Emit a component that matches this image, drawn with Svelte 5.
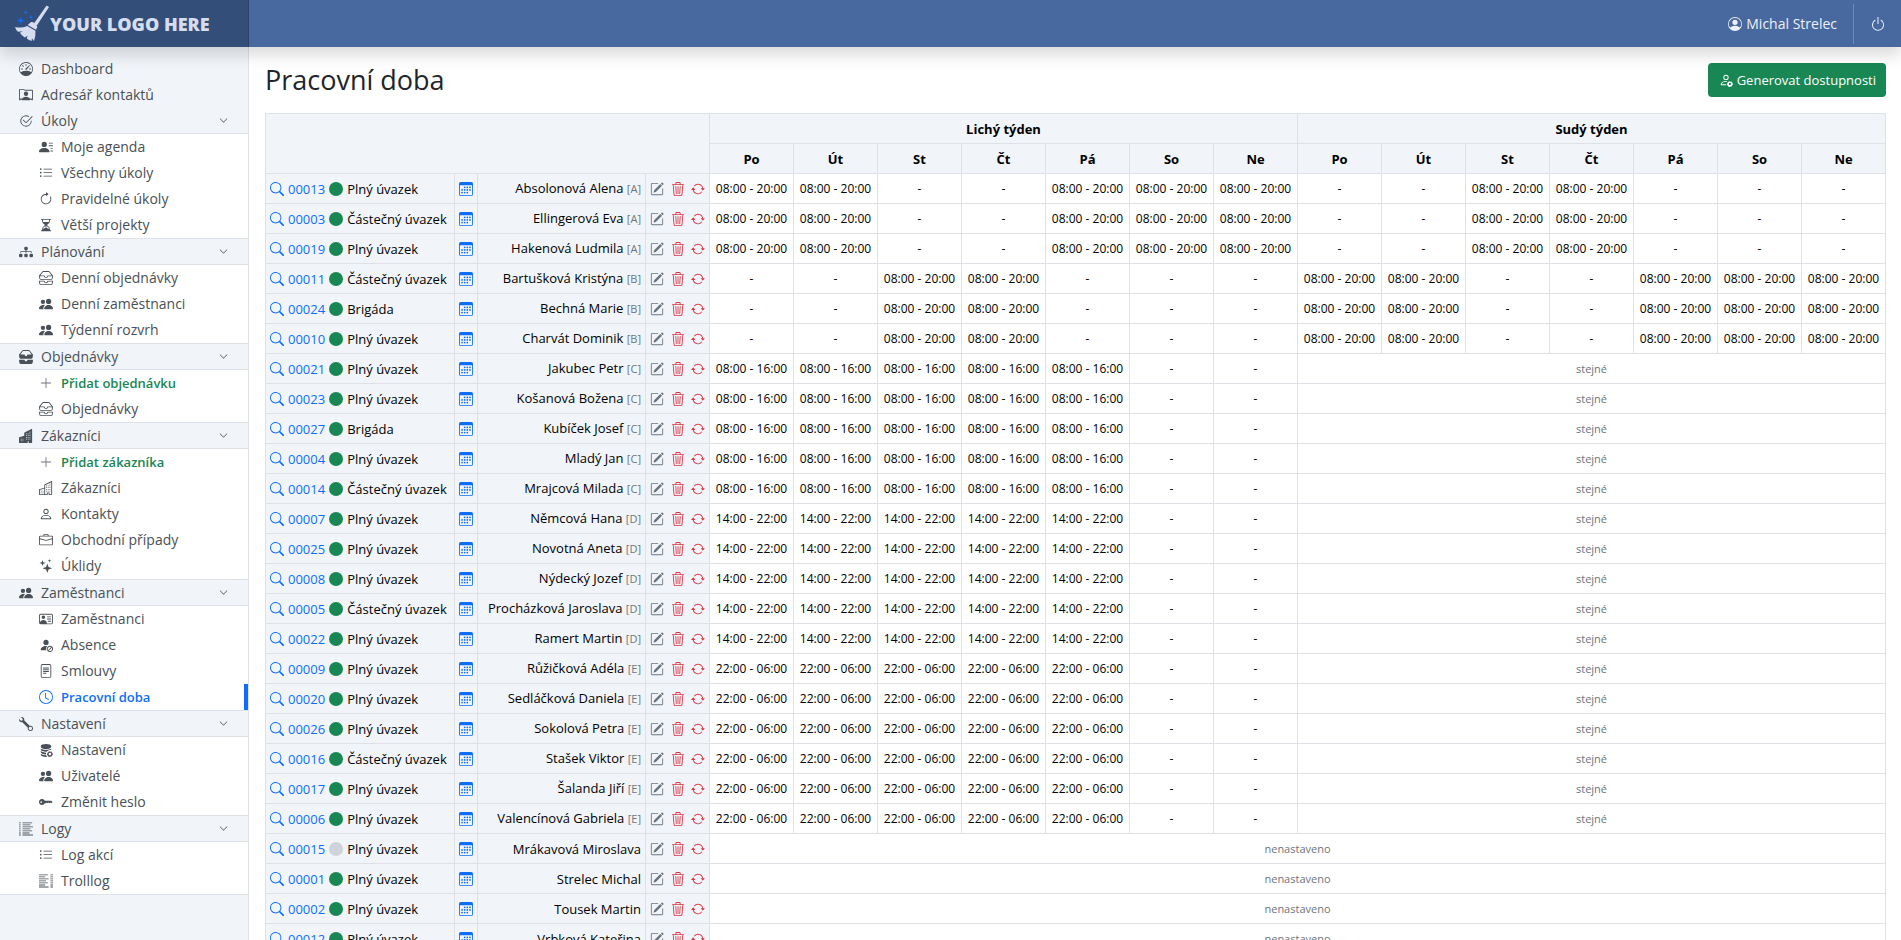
<script lang="ts">
  interface Item {
    icon: string;
    label: string;
    kind?: 'add' | 'active';
  }

  interface Section {
    icon: string;
    label: string;
    items: Item[];
  }

  // 16x16 outlines, filled with the current text colour
  const icons: Record<string, string> = {
    speedometer:
      'M8 2a.5.5 0 0 1 .5.5V4a.5.5 0 0 1-1 0V2.500A.5.5 0 0 1 8 2M3.732 3.732a.5.5 0 0 1 .707 0l.915.914a.5.5 0 1 1-.708.708l-.914-.915a.5.5 0 0 1 0-.707M2 8a.5.5 0 0 1 .5-.5h1.586a.5.5 0 0 1 0 1H2.500A.5.5 0 0 1 2 8m9.500 0a.5.5 0 0 1 .5-.5h1.500a.5.5 0 0 1 0 1H12a.5.5 0 0 1-.5-.5m.754-4.246a.39.39 0 0 0-.527-.020L7.547 7.310A.91.91 0 1 0 8.850 8.569l3.434-4.297a.39.39 0 0 0-.029-.518z M6.664 15.889A8 8 0 1 1 9.336.110a8 8 0 0 1-2.672 15.780zm-4.665-4.283A11.950 11.950 0 0 1 8 10c2.186 0 4.236.585 6.001 1.606a7 7 0 1 0-12.002 0',
    rolodex:
      'M8 9.050a2.500 2.500 0 1 0 0-5 2.500 2.500 0 0 0 0 5 M1 1a1 1 0 0 0-1 1v11a1 1 0 0 0 1 1h.5a.5.5 0 0 0 .5-.5.5.5 0 0 1 1 0 .5.5 0 0 0 .5.5h9a.5.5 0 0 0 .5-.5.5.5 0 0 1 1 0 .5.5 0 0 0 .5.5h.5a1 1 0 0 0 1-1V3a1 1 0 0 0-1-1H6.707L6 1.293A1 1 0 0 0 5.293 1zm0 1h4.293L6 2.707A1 1 0 0 0 6.707 3H15v10h-.085a1.500 1.500 0 0 0-2.400-.63C11.885 11.223 10.554 10 8 10c-2.555 0-3.886 1.224-4.514 2.370a1.500 1.500 0 0 0-2.400.63H1z',
    checkCircle:
      'M2.500 8a5.500 5.500 0 0 1 8.250-4.764.5.5 0 0 0 .5-.866A6.500 6.500 0 1 0 14.500 8a.5.5 0 0 0-1 0 5.500 5.500 0 1 1-11 0 M15.354 3.354a.5.5 0 0 0-.708-.708L8 9.293 5.354 6.646a.5.5 0 1 0-.708.708l3 3a.5.5 0 0 0 .708 0z',
    chevron:
      'M1.646 4.646a.5.5 0 0 1 .708 0L8 10.293l5.646-5.647a.5.5 0 0 1 .708.708l-6 6a.5.5 0 0 1-.708 0l-6-6a.5.5 0 0 1 0-.708',
    personLines:
      'M6 8a3 3 0 1 0 0-6 3 3 0 0 0 0 6m-5 6s-1 0-1-1 1-4 6-4 6 3 6 4-1 1-1 1zM11 3.500a.5.5 0 0 1 .5-.5h4a.5.5 0 0 1 0 1h-4a.5.5 0 0 1-.5-.5m.5 2.500a.5.5 0 0 0 0 1h4a.5.5 0 0 0 0-1zm2 3a.5.5 0 0 0 0 1h2a.5.5 0 0 0 0-1zm0 3a.5.5 0 0 0 0 1h2a.5.5 0 0 0 0-1z',
    list:
      'M5 11.500a.5.5 0 0 1 .5-.5h9a.5.5 0 0 1 0 1h-9a.5.5 0 0 1-.5-.5m0-4a.5.5 0 0 1 .5-.5h9a.5.5 0 0 1 0 1h-9a.5.5 0 0 1-.5-.5m0-4a.5.5 0 0 1 .5-.5h9a.5.5 0 0 1 0 1h-9a.5.5 0 0 1-.5-.5m-3 1a1 1 0 1 0 0-2 1 1 0 0 0 0 2m0 4a1 1 0 1 0 0-2 1 1 0 0 0 0 2m0 4a1 1 0 1 0 0-2 1 1 0 0 0 0 2',
    clockwise:
      'M8 3a5 5 0 1 0 4.546 2.914.5.5 0 0 1 .908-.417A6 6 0 1 1 8 2z M8 4.466V.534a.25.25 0 0 1 .410-.192l2.360 1.966c.12.100.12.284 0 .384L8.410 4.658A.25.25 0 0 1 8 4.466',
    hourglass:
      'M2.500 15a.5.5 0 1 1 0-1h1v-1a4.500 4.500 0 0 1 2.557-4.060c.29-.139.443-.377.443-.59v-.7c0-.213-.154-.451-.443-.59A4.500 4.500 0 0 1 3.500 3V2h-1a.5.5 0 0 1 0-1h11a.5.5 0 0 1 0 1h-1v1a4.500 4.500 0 0 1-2.557 4.060c-.29.139-.443.377-.443.59v.7c0 .213.154.451.443.59A4.500 4.500 0 0 1 12.500 13v1h1a.5.5 0 0 1 0 1zm2-13v1c0 .537.120 1.045.337 1.500h6.326c.216-.455.337-.963.337-1.500V2zm3 6.350c0 .701-.478 1.236-1.011 1.492A3.500 3.500 0 0 0 4.500 13s.866-1.299 3-1.480zm1 0v3.170c2.134.181 3 1.480 3 1.480a3.500 3.500 0 0 0-1.989-3.158C8.978 9.586 8.500 9.052 8.500 8.351z',
    diagram:
      'M6 3.500A1.500 1.500 0 0 1 7.500 2h1A1.500 1.500 0 0 1 10 3.500v1A1.500 1.500 0 0 1 8.500 6v1H14a.5.5 0 0 1 .5.5v1a.5.5 0 0 1-1 0V8h-5v.5a.5.5 0 0 1-1 0V8h-5v.5a.5.5 0 0 1-1 0v-1A.5.5 0 0 1 2 7h5.500V6A1.500 1.500 0 0 1 6 4.500zm-6 8A1.500 1.500 0 0 1 1.500 10h1A1.500 1.500 0 0 1 4 11.500v1A1.500 1.500 0 0 1 2.500 14h-1A1.500 1.500 0 0 1 0 12.500zm6 0A1.500 1.500 0 0 1 7.500 10h1a1.500 1.500 0 0 1 1.500 1.500v1A1.500 1.500 0 0 1 8.500 14h-1A1.500 1.500 0 0 1 6 12.500zm6 0a1.500 1.500 0 0 1 1.500-1.500h1a1.500 1.500 0 0 1 1.500 1.500v1a1.500 1.500 0 0 1-1.500 1.500h-1a1.500 1.500 0 0 1-1.500-1.500z',
    inboxes:
      'M4.980 1a.5.5 0 0 0-.390.188L1.540 5H6a.5.5 0 0 1 .5.5 1.500 1.500 0 0 0 3 0A.5.5 0 0 1 10 5h4.460l-3.050-3.812A.5.5 0 0 0 11.020 1zm9.954 5H10.450a2.500 2.500 0 0 1-4.900 0H1.066l.32 2.562A.5.5 0 0 0 1.884 9h12.234a.5.5 0 0 0 .496-.438zM3.809.563A1.500 1.500 0 0 1 4.981 0h6.038a1.500 1.500 0 0 1 1.172.563l3.700 4.625a.5.5 0 0 1 .105.374l-.39 3.124A1.500 1.500 0 0 1 14.117 10H1.883A1.500 1.500 0 0 1 .394 8.686l-.39-3.124a.5.5 0 0 1 .106-.374zM.125 11.170A.5.5 0 0 1 .5 11H6a.5.5 0 0 1 .5.5 1.500 1.500 0 0 0 3 0 .5.5 0 0 1 .5-.5h5.500a.5.5 0 0 1 .496.562l-.39 3.124A1.500 1.500 0 0 1 14.117 16H1.883a1.500 1.500 0 0 1-1.489-1.314l-.39-3.124a.5.5 0 0 1 .121-.393zm.941.830.32 2.562a.5.5 0 0 0 .497.438h12.234a.5.5 0 0 0 .496-.438l.32-2.562H10.450a2.500 2.500 0 0 1-4.900 0z',
    inboxesFill:
      'M4.980 1a.5.5 0 0 0-.390.188L1.540 5H6a.5.5 0 0 1 .5.5 1.500 1.500 0 0 0 3 0A.5.5 0 0 1 10 5h4.460l-3.050-3.812A.5.5 0 0 0 11.020 1zM3.810.563A1.500 1.500 0 0 1 4.980 0h6.040a1.500 1.500 0 0 1 1.170.563l3.700 4.625a.5.5 0 0 1 .106.374l-.39 3.124A1.500 1.500 0 0 1 14.117 10H1.883A1.500 1.500 0 0 1 .394 8.686l-.39-3.124a.5.5 0 0 1 .106-.374zM.125 11.170A.5.5 0 0 1 .5 11H6a.5.5 0 0 1 .5.5 1.500 1.500 0 0 0 3 0 .5.5 0 0 1 .5-.5h5.500a.5.5 0 0 1 .496.562l-.39 3.124A1.500 1.500 0 0 1 14.117 16H1.883a1.500 1.500 0 0 1-1.489-1.314l-.39-3.124a.5.5 0 0 1 .121-.393z',
    people:
      'M7 14s-1 0-1-1 1-4 5-4 5 3 5 4-1 1-1 1zm4-6a3 3 0 1 0 0-6 3 3 0 0 0 0 6m-5.784 6A2.240 2.240 0 0 1 5 13c0-1.355.680-2.750 1.936-3.720A6.300 6.300 0 0 0 5 9c-4 0-5 3-5 4s1 1 1 1zM4.500 8a2.500 2.500 0 1 0 0-5 2.500 2.500 0 0 0 0 5',
    plus:
      'M8 2a.5.5 0 0 1 .5.5v5h5a.5.5 0 0 1 0 1h-5v5a.5.5 0 0 1-1 0v-5h-5a.5.5 0 0 1 0-1h5v-5A.5.5 0 0 1 8 2',
    buildings:
      'M14.763.075A.5.5 0 0 1 15 .5v15a.5.5 0 0 1-.5.5h-3a.5.5 0 0 1-.5-.5V14h-1v1.500a.5.5 0 0 1-.5.5h-9a.5.5 0 0 1-.5-.5V10a.5.5 0 0 1 .342-.474L6 7.640V4.500a.5.5 0 0 1 .276-.447l8-4a.5.5 0 0 1 .487.022M6 8.694 1 10.360V15h5zM7 15h2v-1.500a.5.5 0 0 1 .5-.5h2a.5.5 0 0 1 .5.5V15h2V1.309l-7 3.500z M2 11h1v1H2zm2 0h1v1H4zm-2 2h1v1H2zm2 0h1v1H4zm4-4h1v1H8zm2 0h1v1h-1zm-2 2h1v1H8zm2 0h1v1h-1zm2-2h1v1h-1zm0 2h1v1h-1zM8 7h1v1H8zm2 0h1v1h-1zm2 0h1v1h-1zM8 5h1v1H8zm2 0h1v1h-1zm2 0h1v1h-1zm0-2h1v1h-1z',
    buildingsFill:
      'M15 .5a.5.5 0 0 0-.724-.447l-8 4A.5.5 0 0 0 6 4.500v3.140L.342 9.526A.5.5 0 0 0 0 10v5.500a.5.5 0 0 0 .5.5h9a.5.5 0 0 0 .5-.5V14h1v1.500a.5.5 0 0 0 .5.5h3a.5.5 0 0 0 .5-.5zM2 11h1v1H2zm2 0h1v1H4zm-1 2v1H2v-1zm1 0h1v1H4zm9-10v1h-1V3zM8 5h1v1H8zm1 2v1H8V7zM8 9h1v1H8zm2 0h1v1h-1zm-1 2v1H8v-1zm1 0h1v1h-1zm3-2v1h-1V9zm-1 2h1v1h-1zm-2-4h1v1h-1zm3 0v1h-1V7zm-2-2v1h-1V5zm1 0h1v1h-1z',
    person:
      'M8 8a3 3 0 1 0 0-6 3 3 0 0 0 0 6m2-3a2 2 0 1 1-4 0 2 2 0 0 1 4 0m4 8c0 1-1 1-1 1H3s-1 0-1-1 1-4 6-4 6 3 6 4m-1-.004c-.001-.246-.154-.986-.832-1.664C11.516 10.680 10.289 10 8 10s-3.516.680-4.168 1.332c-.678.678-.830 1.418-.832 1.664z',
    briefcase:
      'M6.500 1A1.500 1.500 0 0 0 5 2.500V3H1.500A1.500 1.500 0 0 0 0 4.500v8A1.500 1.500 0 0 0 1.500 14h13a1.500 1.500 0 0 0 1.500-1.500v-8A1.500 1.500 0 0 0 14.500 3H11v-.5A1.500 1.500 0 0 0 9.500 1zm0 1h3a.5.5 0 0 1 .5.5V3H6v-.5a.5.5 0 0 1 .5-.5m1.886 6.914L15 7.151V12.500a.5.5 0 0 1-.5.5h-13a.5.5 0 0 1-.5-.5V7.150l6.614 1.764a1.500 1.500 0 0 0 .772 0M1.500 4h13a.5.5 0 0 1 .5.5v1.616L8.129 7.948a.5.5 0 0 1-.258 0L1 6.116V4.500a.5.5 0 0 1 .5-.5',
    stars:
      'M9.500 5 L10.900 9.100 15 10.500 10.900 11.900 9.500 16 8.100 11.900 4 10.500 8.100 9.100z M4 1 L4.900 3.600 7.500 4.500 4.900 5.400 4 8 3.100 5.400 .5 4.500 3.100 3.600z M12 0 L12.500 1.500 14 2 12.500 2.500 12 4 11.500 2.500 10 2 11.500 1.500z',
    vcard:
      'M5 8a2 2 0 1 0 0-4 2 2 0 0 0 0 4m4-2.500a.5.5 0 0 1 .5-.5h4a.5.5 0 0 1 0 1h-4a.5.5 0 0 1-.5-.5M9 8a.5.5 0 0 1 .5-.5h4a.5.5 0 0 1 0 1h-4A.5.5 0 0 1 9 8m1 2.500a.5.5 0 0 1 .5-.5h3a.5.5 0 0 1 0 1h-3a.5.5 0 0 1-.5-.5 M2 2a2 2 0 0 0-2 2v8a2 2 0 0 0 2 2h12a2 2 0 0 0 2-2V4a2 2 0 0 0-2-2zM1 4a1 1 0 0 1 1-1h12a1 1 0 0 1 1 1v8a1 1 0 0 1-1 1H8.960q.04-.245.040-.5C9 10.567 7.210 9 5 9c-2.086 0-3.800 1.398-3.984 3.181A1 1 0 0 1 1 12z',
    personSlash:
      'M13.879 10.414a2.501 2.501 0 0 0-3.465 3.465zm.707.707-3.465 3.465a2.501 2.501 0 0 0 3.465-3.465m-4.560-1.096a3.500 3.500 0 1 1 4.949 4.950 3.500 3.500 0 0 1-4.950-4.950zM11 5a3 3 0 1 1-6 0 3 3 0 0 1 6 0m-9 8c0 1 1 1 1 1h5.256A4.500 4.500 0 0 1 8 12.500a4.500 4.500 0 0 1 1.544-3.393Q8.844 9.002 8 9c-5 0-6 3-6 4',
    fileText:
      'M5 4a.5.5 0 0 0 0 1h6a.5.5 0 0 0 0-1zm-.5 2.500A.5.5 0 0 1 5 6h6a.5.5 0 0 1 0 1H5a.5.5 0 0 1-.5-.5M5 8a.5.5 0 0 0 0 1h6a.5.5 0 0 0 0-1zm0 2a.5.5 0 0 0 0 1h3a.5.5 0 0 0 0-1z M2 2a2 2 0 0 1 2-2h8a2 2 0 0 1 2 2v12a2 2 0 0 1-2 2H4a2 2 0 0 1-2-2zm10-1H4a1 1 0 0 0-1 1v12a1 1 0 0 0 1 1h8a1 1 0 0 0 1-1V2a1 1 0 0 0-1-1',
    clock:
      'M8 3.500a.5.5 0 0 0-1 0V9a.5.5 0 0 0 .252.434l3.500 2a.5.5 0 0 0 .496-.868L8 8.710z M8 16A8 8 0 1 0 8 0a8 8 0 0 0 0 16m7-8A7 7 0 1 1 1 8a7 7 0 0 1 14 0',
    wrench:
      'M.102 2.223A3.004 3.004 0 0 0 3.780 5.897l6.341 6.252A3.003 3.003 0 0 0 13 16a3 3 0 1 0-.851-5.878L5.897 3.781A3.004 3.004 0 0 0 2.223.100l2.141 2.142L4 4l-1.757.364zm13.370 9.019.528.026.287.445.445.287.026.529L15 13l-.242.471-.026.529-.445.287-.287.445-.529.026L13 15l-.471-.242-.529-.026-.287-.445-.445-.287-.026-.529L11 13l.242-.471.026-.529.445-.287.287-.445.529-.026L13 11z',
    database:
      'M8 1c-1.573 0-3.022.289-4.096.777C2.875 2.245 2 2.993 2 4s.875 1.755 1.904 2.223C4.978 6.711 6.427 7 8 7s3.022-.289 4.096-.777C13.125 5.755 14 5.007 14 4s-.875-1.755-1.904-2.223C11.022 1.289 9.573 1 8 1 M2 7v-.839c.457.432 1.004.751 1.490.972C4.722 7.693 6.318 8 8 8s3.278-.307 4.510-.867c.486-.22 1.033-.54 1.490-.972V7c0 .424-.155.802-.411 1.133a4.510 4.510 0 0 0-4.815 1.843A12 12 0 0 1 8 10c-1.573 0-3.022-.289-4.096-.777C2.875 8.755 2 8.007 2 7m6.257 3.998L8 11c-1.682 0-3.278-.307-4.510-.867-.486-.22-1.033-.54-1.490-.972V10c0 1.007.875 1.755 1.904 2.223C4.978 12.711 6.427 13 8 13h.027a4.550 4.550 0 0 1 .230-2.002m-.002 3L8 14c-1.682 0-3.278-.307-4.510-.867-.486-.22-1.033-.54-1.490-.972V13c0 1.007.875 1.755 1.904 2.223C4.978 15.711 6.427 16 8 16c.536 0 1.058-.034 1.555-.097a4.500 4.500 0 0 1-1.300-1.905 M12.500 9 L13 10 14.200 9.800 14.600 10.900 15.700 11.300 15.500 12.500 16 13.500 15 14 14.600 15.200 13.400 15.500 12.500 16.200 11.500 15.600 10.300 15.400 10 14.200 9 13.500 9.500 12.500 9.300 11.300 10.400 10.900 10.900 9.800 12 10zm0 2.200a1.500 1.500 0 1 0 .001 3 1.500 1.500 0 0 0 0-3',
    key:
      'M3.500 11.500a3.500 3.500 0 1 1 3.163-5H14L15.500 8 14 9.500l-1-1-1 1-1-1-1 1-1-1-1 1H6.663a3.500 3.500 0 0 1-3.163 2M2.500 9a1 1 0 1 0 0-2 1 1 0 0 0 0 2',
    logs:
      'M0 .5h2v1H0zM4 .5h11v1H4zM0 2.800h2v1H0zM4 2.800h9v1H4zM0 5.100h2v1H0zM4 5.100h12v1H4zM0 7.400h2v1H0zM4 7.400h9v1H4zM0 9.700h2v1H0zM4 9.700h11v1H4zM0 12h2v1H0zM4 12h8v1H4zM0 14.300h2v1H0zM4 14.300h12v1H4z',
    bodyText:
      'M0 .5h10v1H0zM13 .5h3v1h-3zM0 2.800h7v1H0zM13 2.800h3v1h-3zM0 5.100h11v1H0zM13 5.100h3v1h-3zM0 7.400h8v1H0zM13 7.400h3v1h-3zM0 9.700h10v1H0zM13 9.700h3v1h-3zM0 12h7v1H0zM13 12h3v1h-3zM0 14.300h11v1H0zM13 14.300h3v1h-3z',
    search:
      'M11.742 10.344a6.500 6.500 0 1 0-1.397 1.398h-.001q.044.060.098.115l3.850 3.850a1 1 0 0 0 1.415-1.414l-3.850-3.850a1 1 0 0 0-.115-.100zM12 6.500a5.500 5.500 0 1 1-11 0 5.500 5.500 0 0 1 11 0',
    calendar:
      'M14 0H2a2 2 0 0 0-2 2v12a2 2 0 0 0 2 2h12a2 2 0 0 0 2-2V2a2 2 0 0 0-2-2M1 3.857h14v10.286c0 .473-.448.857-1 .857H2c-.552 0-1-.384-1-.857z M6.500 7a1 1 0 1 0 0-2 1 1 0 0 0 0 2m3 0a1 1 0 1 0 0-2 1 1 0 0 0 0 2m3 0a1 1 0 1 0 0-2 1 1 0 0 0 0 2m-9 3a1 1 0 1 0 0-2 1 1 0 0 0 0 2m3 0a1 1 0 1 0 0-2 1 1 0 0 0 0 2m3 0a1 1 0 1 0 0-2 1 1 0 0 0 0 2m3 0a1 1 0 1 0 0-2 1 1 0 0 0 0 2m-9 3a1 1 0 1 0 0-2 1 1 0 0 0 0 2m3 0a1 1 0 1 0 0-2 1 1 0 0 0 0 2m3 0a1 1 0 1 0 0-2 1 1 0 0 0 0 2',
    edit:
      'M15.502 1.940a.5.5 0 0 1 0 .706L14.459 3.690l-2-2L13.502.646a.5.5 0 0 1 .707 0l1.293 1.293zm-1.750 2.456-2-2L4.939 9.210a.5.5 0 0 0-.121.196l-.805 2.414a.25.25 0 0 0 .316.316l2.414-.805a.5.5 0 0 0 .196-.120z M1 13.500A1.500 1.500 0 0 0 2.500 15h11a1.500 1.500 0 0 0 1.500-1.500v-6a.5.5 0 0 0-1 0v6a.5.5 0 0 1-.5.5h-11a.5.5 0 0 1-.5-.5v-11a.5.5 0 0 1 .5-.5H9a.5.5 0 0 0 0-1H2.500A1.500 1.500 0 0 0 1 2.500z',
    trash:
      'M6.500 1h3a.5.5 0 0 1 .5.5v1H6v-1a.5.5 0 0 1 .5-.5M11 2.500v-1A1.500 1.500 0 0 0 9.500 0h-3A1.500 1.500 0 0 0 5 1.500v1H1.500a.5.5 0 0 0 0 1h.538l.853 10.660A2 2 0 0 0 4.885 16h6.230a2 2 0 0 0 1.994-1.840l.853-10.660h.538a.5.5 0 0 0 0-1zm1.958 1-.846 10.580a1 1 0 0 1-.997.920h-6.230a1 1 0 0 1-.997-.920L3.042 3.500zm-7.487 1a.5.5 0 0 1 .528.470l.5 8.500a.5.5 0 0 1-.998.060L5 5.030a.5.5 0 0 1 .470-.530Zm5.058 0a.5.5 0 0 1 .470.530l-.5 8.500a.5.5 0 1 1-.998-.060l.5-8.500a.5.5 0 0 1 .528-.470M8 4.500a.5.5 0 0 1 .5.5v8.500a.5.5 0 0 1-1 0V5a.5.5 0 0 1 .5-.5',
    repeat:
      'M11.534 7h3.932a.25.25 0 0 1 .192.410l-1.966 2.360a.25.25 0 0 1-.384 0l-1.966-2.360a.25.25 0 0 1 .192-.410m-11 2h3.932a.25.25 0 0 0 .192-.410L2.692 6.230a.25.25 0 0 0-.384 0L.342 8.590A.25.25 0 0 0 .534 9 M8 3c-1.552 0-2.940.707-3.857 1.818a.5.5 0 1 1-.771-.636A6.002 6.002 0 0 1 13.917 7H12.900A5 5 0 0 0 8 3M3.100 9a5.002 5.002 0 0 0 8.757 2.182.5.5 0 1 1 .771.636A6.002 6.002 0 0 1 2.083 9z',
    personCircle:
      'M11 6a3 3 0 1 1-6 0 3 3 0 0 1 6 0 M0 8a8 8 0 1 1 16 0A8 8 0 0 1 0 8m8-7a7 7 0 0 0-5.468 11.370C3.242 11.226 4.805 10 8 10s4.757 1.225 5.468 2.370A7 7 0 0 0 8 1',
    power:
      'M7.500 1v7h1V1z M3 8.812a5 5 0 0 1 2.578-4.375l-.485-.874A6 6 0 1 0 11 3.616l-.501.865A5 5 0 1 1 3 8.812',
    personGear:
      'M11 5a3 3 0 1 1-6 0 3 3 0 0 1 6 0M8 7a2 2 0 1 0 0-4 2 2 0 0 0 0 4m.256 7a4.500 4.500 0 0 1-.229-1.004H3c.001-.246.154-.986.832-1.664C4.484 10.680 5.711 10 8 10q.390 0 .740.025c.226-.341.496-.650.804-.918Q8.844 9.002 8 9c-5 0-6 3-6 4s1 1 1 1z M12.500 9 L13 10 14.200 9.800 14.600 10.900 15.700 11.300 15.500 12.500 16 13.500 15 14 14.600 15.200 13.400 15.500 12.500 16.200 11.500 15.600 10.300 15.400 10 14.200 9 13.500 9.500 12.500 9.300 11.300 10.400 10.900 10.900 9.800 12 10zm0 2.200a1.300 1.300 0 1 0 .001 2.600 1.300 1.300 0 0 0 0-2.600',
  };

  const topItems: Item[] = [
    { icon: 'speedometer', label: 'Dashboard' },
    { icon: 'rolodex', label: 'Adresář kontaktů' },
  ];

  const sections: Section[] = [
    {
      icon: 'checkCircle',
      label: 'Úkoly',
      items: [
        { icon: 'personLines', label: 'Moje agenda' },
        { icon: 'list', label: 'Všechny úkoly' },
        { icon: 'clockwise', label: 'Pravidelné úkoly' },
        { icon: 'hourglass', label: 'Větší projekty' },
      ],
    },
    {
      icon: 'diagram',
      label: 'Plánování',
      items: [
        { icon: 'inboxes', label: 'Denní objednávky' },
        { icon: 'people', label: 'Denní zaměstnanci' },
        { icon: 'people', label: 'Týdenní rozvrh' },
      ],
    },
    {
      icon: 'inboxesFill',
      label: 'Objednávky',
      items: [
        { icon: 'plus', label: 'Přidat objednávku', kind: 'add' },
        { icon: 'inboxes', label: 'Objednávky' },
      ],
    },
    {
      icon: 'buildingsFill',
      label: 'Zákazníci',
      items: [
        { icon: 'plus', label: 'Přidat zákazníka', kind: 'add' },
        { icon: 'buildings', label: 'Zákazníci' },
        { icon: 'person', label: 'Kontakty' },
        { icon: 'briefcase', label: 'Obchodní případy' },
        { icon: 'stars', label: 'Úklidy' },
      ],
    },
    {
      icon: 'people',
      label: 'Zaměstnanci',
      items: [
        { icon: 'vcard', label: 'Zaměstnanci' },
        { icon: 'personSlash', label: 'Absence' },
        { icon: 'fileText', label: 'Smlouvy' },
        { icon: 'clock', label: 'Pracovní doba', kind: 'active' },
      ],
    },
    {
      icon: 'wrench',
      label: 'Nastavení',
      items: [
        { icon: 'database', label: 'Nastavení' },
        { icon: 'people', label: 'Uživatelé' },
        { icon: 'key', label: 'Změnit heslo' },
      ],
    },
    {
      icon: 'logs',
      label: 'Logy',
      items: [
        { icon: 'list', label: 'Log akcí' },
        { icon: 'bodyText', label: 'Trolllog' },
      ],
    },
  ];

  const days = ['Po', 'Út', 'St', 'Čt', 'Pá', 'So', 'Ne'];

  const long = '08:00 - 20:00';
  const longWeek = [long, long, '-', '-', long, long, long];
  const shortWeek = ['-', '-', long, long, '-', '-', '-'];
  const workdays = (hours: string) => [hours, hours, hours, hours, hours, '-', '-'];

  // odd week and even week per shift; a missing even week repeats the odd one
  const shifts: Record<string, { odd: string[]; even?: string[] }> = {
    A: { odd: longWeek, even: shortWeek },
    B: { odd: shortWeek, even: longWeek },
    C: { odd: workdays('08:00 - 16:00') },
    D: { odd: workdays('14:00 - 22:00') },
    E: { odd: workdays('22:00 - 06:00') },
  };

  const full = 'Plný úvazek';
  const part = 'Částečný úvazek';
  const temp = 'Brigáda';

  const employees = [
    { id: '00013', contract: full, name: 'Absolonová Alena', shift: 'A' },
    { id: '00003', contract: part, name: 'Ellingerová Eva', shift: 'A' },
    { id: '00019', contract: full, name: 'Hakenová Ludmila', shift: 'A' },
    { id: '00011', contract: part, name: 'Bartušková Kristýna', shift: 'B' },
    { id: '00024', contract: temp, name: 'Bechná Marie', shift: 'B' },
    { id: '00010', contract: full, name: 'Charvát Dominik', shift: 'B' },
    { id: '00021', contract: full, name: 'Jakubec Petr', shift: 'C' },
    { id: '00023', contract: full, name: 'Košanová Božena', shift: 'C' },
    { id: '00027', contract: temp, name: 'Kubíček Josef', shift: 'C' },
    { id: '00004', contract: full, name: 'Mladý Jan', shift: 'C' },
    { id: '00014', contract: part, name: 'Mrajcová Milada', shift: 'C' },
    { id: '00007', contract: full, name: 'Němcová Hana', shift: 'D' },
    { id: '00025', contract: full, name: 'Novotná Aneta', shift: 'D' },
    { id: '00008', contract: full, name: 'Nýdecký Jozef', shift: 'D' },
    { id: '00005', contract: part, name: 'Procházková Jaroslava', shift: 'D' },
    { id: '00022', contract: full, name: 'Ramert Martin', shift: 'D' },
    { id: '00009', contract: full, name: 'Růžičková Adéla', shift: 'E' },
    { id: '00020', contract: full, name: 'Sedláčková Daniela', shift: 'E' },
    { id: '00026', contract: full, name: 'Sokolová Petra', shift: 'E' },
    { id: '00016', contract: part, name: 'Stašek Viktor', shift: 'E' },
    { id: '00017', contract: full, name: 'Šalanda Jiří', shift: 'E' },
    { id: '00006', contract: full, name: 'Valencínová Gabriela', shift: 'E' },
    { id: '00015', contract: full, name: 'Mrákavová Miroslava', inactive: true },
    { id: '00001', contract: full, name: 'Strelec Michal' },
    { id: '00002', contract: full, name: 'Tousek Martin' },
    { id: '00012', contract: full, name: 'Vrbková Kateřina' },
  ];
</script>

{#snippet icon(name: string)}
  <svg class="icon" viewBox="0 0 16 16" aria-hidden="true"><path fill-rule="evenodd" d={icons[name]} /></svg>
{/snippet}

<div class="app">
  <header class="topbar">
    <a class="brand" href="#home">
      <svg class="brand__mark" viewBox="0 0 36 38" aria-hidden="true">
        <path fill="#d5ddef" d="M32.500 0.500 L35 2 L22.500 21 L19.500 19z" />
        <path fill="#d5ddef" d="M16.500 17.500 Q21 17.500 23 22.500 L21.500 25.500 L13 20.500z" />
        <path
          fill="#d5ddef"
          d="M12.500 21.500 L21 26.500 Q21.500 32 19.500 37 L17.500 34.500 L17 37 Q14.500 36.500 12 34.500 L13 31.500 L10 33.500 Q6.500 31 5 28.500 L8 27 L3 27.500 Q1 25.500 0 22.500 Q7 24 12.500 21.500z"
        />
        <path
          fill="#0d6efd"
          d="M6 12 L7 15 10 16 7 17 6 20 5 17 2 16 5 15z M11 5 L11.600 6.900 13.500 7.500 11.600 8.100 11 10 10.400 8.100 8.500 7.500 10.400 6.900z M16.500 10 L17.100 11.900 19 12.500 17.100 13.100 16.500 15 15.900 13.100 14 12.500 15.900 11.900z"
        />
      </svg>
      <span>YOUR LOGO HERE</span>
    </a>
    <nav class="topbar__user" aria-label="Uživatel">
      <a class="topbar__name" href="#profile">{@render icon('personCircle')} Michal Strelec</a>
      <a class="topbar__logout" href="#logout" aria-label="Odhlásit">{@render icon('power')}</a>
    </nav>
  </header>

  <div class="body">
    <nav class="sidebar" aria-label="Menu">
      {#each topItems as item}
        <a class="sidebar__link" href="#menu">{@render icon(item.icon)}{item.label}</a>
      {/each}
      {#each sections as section}
        <button class="sidebar__link sidebar__heading" type="button" aria-expanded="true">
          {@render icon(section.icon)}{section.label}
          <span class="sidebar__chevron">{@render icon('chevron')}</span>
        </button>
        <div class="sidebar__items">
          {#each section.items as item}
            <a class={['sidebar__link', 'sidebar__link--sub', item.kind]} href="#menu">
              {@render icon(item.icon)}{item.label}
            </a>
          {/each}
        </div>
      {/each}
    </nav>

    <main class="content">
      <div class="content__head">
        <h1>Pracovní doba</h1>
        <button class="generate" type="button">{@render icon('personGear')} Generovat dostupnosti</button>
      </div>

      <table class="hours">
        <colgroup>
          <col class="col-contract" />
          <col class="col-calendar" />
          <col class="col-name" />
          <col class="col-actions" />
          <col span="14" />
        </colgroup>
        <thead>
          <tr>
            <td colspan="4" rowspan="2"></td>
            <th colspan="7">Lichý týden</th>
            <th colspan="7">Sudý týden</th>
          </tr>
          <tr>
            {#each [...days, ...days] as day}
              <th>{day}</th>
            {/each}
          </tr>
        </thead>
        <tbody>
          {#each employees as employee}
            <tr>
              <td class="side">
                <div class="contract">
                  <a href="#detail">{@render icon('search')} {employee.id}</a>
                  <span class={['dot', { 'dot--off': employee.inactive }]}></span>
                  {employee.contract}
                </div>
              </td>
              <td class="side side--calendar">
                <a href="#calendar" aria-label="Kalendář">{@render icon('calendar')}</a>
              </td>
              <td class="side side--name">
                {employee.name}
                {#if employee.shift}<small>[{employee.shift}]</small>{/if}
              </td>
              <td class="side">
                <div class="actions">
                  <button type="button" aria-label="Upravit">{@render icon('edit')}</button>
                  <button class="danger" type="button" aria-label="Smazat">{@render icon('trash')}</button>
                  <button class="danger" type="button" aria-label="Obnovit">{@render icon('repeat')}</button>
                </div>
              </td>
              {#if employee.shift}
                {#each shifts[employee.shift].odd as hours}
                  <td class="time">{hours}</td>
                {/each}
                {#if shifts[employee.shift].even}
                  {#each shifts[employee.shift].even ?? [] as hours}
                    <td class="time">{hours}</td>
                  {/each}
                {:else}
                  <td class="note" colspan="7">stejné</td>
                {/if}
              {:else}
                <td class="note" colspan="14">nenastaveno</td>
              {/if}
            </tr>
          {/each}
        </tbody>
      </table>
    </main>
  </div>
</div>

<style>
  :global(body) {
    background: #fff;
  }

  .app {
    display: flex;
    flex-direction: column;
    height: 100vh;
    overflow: hidden;
    font-family: 'Segoe UI', 'Open Sans', 'Noto Sans', sans-serif;
    font-size: 13px;
    line-height: 20px;
    color: #000;
  }

  .app :global(*) {
    box-sizing: border-box;
  }

  a {
    color: #0d6efd;
    text-decoration: none;
  }

  button {
    font: inherit;
    border: 0;
    cursor: pointer;
  }

  .icon {
    display: block;
    flex: none;
    width: 14px;
    height: 14px;
    fill: currentColor;
  }

  .topbar {
    position: relative;
    z-index: 1;
    display: flex;
    flex: none;
    justify-content: space-between;
    height: 47px;
    background: #4868a0;
    box-shadow: 0 8px 16px rgba(0, 0, 0, 0.15);
  }

  .brand {
    display: flex;
    align-items: center;
    width: 249px;
    padding-left: 15px;
    background: #334e78;
    border-right: 1px solid #2b4166;
    color: #d5ddef;
    font-size: 18px;
    font-weight: 800;
    white-space: nowrap;
  }

  .brand__mark {
    width: 35px;
    height: 37px;
  }

  .topbar__user {
    display: flex;
    align-items: center;
  }

  .topbar__user a {
    display: flex;
    align-items: center;
    gap: 4px;
    height: 40px;
    color: #eef1f8;
    font-size: 14px;
    font-weight: 500;
  }

  .topbar__user .topbar__name {
    padding-right: 16px;
    border-right: 1px solid #6f89ba;
  }

  .topbar__user .topbar__logout {
    padding: 0 15px 0 16px;
  }

  .topbar__logout .icon {
    width: 16px;
    height: 16px;
  }

  .body {
    display: flex;
    flex: 1;
    min-height: 0;
  }

  .sidebar {
    flex: none;
    width: 249px;
    padding-top: 9px;
    background: #f1f5fa;
    border-right: 1px solid #dee2e6;
    overflow: hidden;
  }

  .sidebar__link {
    display: flex;
    align-items: center;
    gap: 8px;
    width: 100%;
    height: 26px;
    padding: 0 20px 0 19px;
    background: none;
    color: #495057;
    font-size: 14px;
    font-weight: 500;
    text-align: left;
  }

  .sidebar__heading {
    height: 27px;
    border-top: 1px solid #dee2e6;
    border-bottom: 1px solid #dee2e6;
  }

  .sidebar > .sidebar__link + .sidebar__heading {
    height: 26px;
    border-top: 0;
  }

  .sidebar__chevron {
    margin-left: auto;
  }

  .sidebar__chevron .icon {
    width: 9px;
    height: 9px;
  }

  .sidebar__items {
    background: #fff;
  }

  .sidebar__items:last-child {
    border-bottom: 1px solid #dee2e6;
  }

  .sidebar__link--sub {
    padding-left: 39px;
  }

  .sidebar__link.add {
    color: #198754;
    font-size: 13px;
    font-weight: 600;
  }

  .sidebar__link.add .icon {
    color: #6c757d;
  }

  .sidebar__link.active {
    border-right: 4px solid #0d6efd;
    color: #0d6efd;
    font-size: 13px;
    font-weight: 600;
  }

  .content {
    flex: 1;
    min-width: 0;
    padding: 16px 15px 0 16px;
    overflow: hidden;
  }

  .content__head {
    display: flex;
    align-items: center;
    justify-content: space-between;
    height: 34px;
    margin-bottom: 16px;
  }

  h1 {
    margin: 0;
    color: #212529;
    font-size: 27px;
    font-weight: 500;
    line-height: 34px;
  }

  .generate {
    display: flex;
    align-items: center;
    gap: 4px;
    height: 34px;
    padding: 0 10px 0 11px;
    background: #198754;
    border-radius: 4px;
    color: #fff;
  }

  .hours {
    width: 100%;
    table-layout: fixed;
    border-collapse: collapse;
  }

  .col-contract {
    width: 189px;
  }

  .col-calendar {
    width: 23px;
  }

  .col-name {
    width: 168px;
  }

  .col-actions {
    width: 64px;
  }

  .hours th,
  .hours td {
    height: 30px;
    padding: 0 4px;
    border: 1px solid #dee2e6;
    text-align: center;
    white-space: nowrap;
  }

  .hours th {
    font-weight: 700;
  }

  .hours thead,
  .hours .side {
    background: #f1f5fa;
  }

  .contract,
  .contract a {
    display: flex;
    align-items: center;
    gap: 4px;
  }

  .dot {
    width: 14px;
    height: 14px;
    background: #198754;
    border-radius: 50%;
  }

  .dot--off {
    background: #ced4da;
  }

  .hours .side--name {
    text-align: right;
  }

  small {
    color: #6c757d;
    font-size: 11px;
  }

  .actions {
    display: flex;
    justify-content: space-between;
  }

  .actions button {
    padding: 0;
    background: none;
    color: #6c757d;
  }

  .actions .danger {
    color: #dc3545;
  }

  .hours .time {
    font-size: 12px;
  }

  .hours .note {
    color: #6c757d;
    font-size: 11px;
  }
</style>
